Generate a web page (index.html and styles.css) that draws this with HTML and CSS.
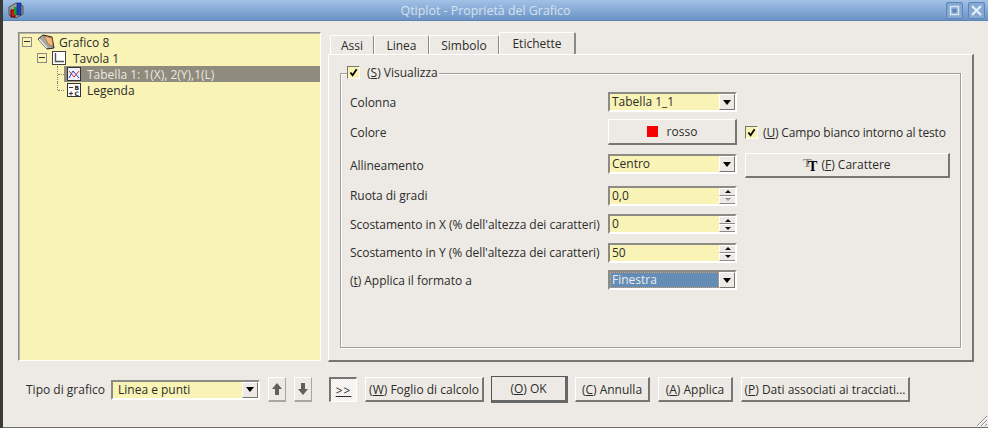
FILE: index.html
```html
<!DOCTYPE html>
<html lang="it">
<head>
    <meta charset="UTF-8">
    <title>Qtiplot - Proprietà del Grafico</title>
    <link rel="stylesheet" href="styles.css">
</head>
<body>
    <div class="window">
        <header class="titlebar">
            <svg class="app-icon" width="18" height="18" viewBox="0 0 18 18">
                <path d="M2 6 L9 2 L16 5 L16 13 L9 17 L2 14 Z" fill="#9a9a96" stroke="#55564f"/>
                <rect x="4" y="9" width="4" height="7" fill="#d01818" stroke="#600"/>
                <rect x="7" y="6" width="3" height="8" fill="#1a9a2a"/>
                <rect x="10" y="2" width="4" height="12" fill="#1b3fc0" stroke="#102070" stroke-width=".6"/>
            </svg>
            <div class="title">Qtiplot - Proprietà del Grafico</div>
            <div class="win-buttons">
                <span class="win-btn">
                    <svg width="15" height="15" viewBox="0 0 15 15"><rect x="3.5" y="3.5" width="8" height="8" fill="none" stroke="#dfe8f2" stroke-width="1.4"/><rect x="5.5" y="6" width="4" height="3.5" fill="#5f87b6"/></svg>
                </span>
                <span class="win-btn">
                    <svg width="15" height="15" viewBox="0 0 15 15"><path d="M3 3 L12 12 M12 3 L3 12" stroke="#e6edf5" stroke-width="2.2"/></svg>
                </span>
            </div>
        </header>

        <div class="content">
            <div class="top">
                <aside class="tree">
                    <div class="tree-row level-0">
                        <span class="expander"></span>
                        <svg class="tree-icon" width="18" height="16" viewBox="0 0 18 16">
                            <path d="M1 5 L6 1 L15 3 L17 14 L10 15 Z" fill="#a9a9a4" stroke="#222"/>
                            <path d="M7 2 L15 4 L16 13 L11 10 Z" fill="#f5b678" stroke="#8a5a2a" stroke-width=".6"/>
                            <path d="M2 5 L10 14" stroke="#e8e8e4" stroke-width="1.4"/>
                        </svg>
                        <span class="tree-label">Grafico 8</span>
                    </div>
                    <div class="tree-row level-1">
                        <span class="expander"></span>
                        <svg class="tree-icon" width="15" height="16" viewBox="0 0 15 16">
                            <rect x=".5" y="1.5" width="13" height="13" fill="#fff" stroke="#444"/>
                            <path d="M3.5 3 V11.5 H12" fill="none" stroke="#555" stroke-width="1.4"/>
                        </svg>
                        <span class="tree-label">Tavola 1</span>
                    </div>
                    <div class="tree-row level-2">
                        <span class="branch"></span>
                        <div class="tree-item selected">
                            <svg class="tree-icon" width="15" height="15" viewBox="0 0 15 15">
                                <rect x=".5" y=".5" width="13" height="13" fill="#eef0fa" stroke="#333"/>
                                <path d="M2 11 L6 4 L12 11" fill="none" stroke="#2a3fc8"/>
                                <path d="M2 4 L7 10 L12 4" fill="none" stroke="#d8343a"/>
                            </svg>
                            <span class="tree-label">Tabella 1: 1(X), 2(Y),1(L)</span>
                        </div>
                    </div>
                    <div class="tree-row level-2">
                        <span class="branch last"></span>
                        <div class="tree-item">
                            <svg class="tree-icon" width="15" height="15" viewBox="0 0 15 15">
                                <rect x=".5" y=".5" width="13" height="13" fill="#fff" stroke="#333"/>
                                <path d="M2 4.5 H6 M2 10.5 H6 M4 8.5 V12.5" stroke="#333"/>
                                <text class="legend-glyph" x="7.5" y="6.5">B</text>
                                <text class="legend-glyph" x="7.5" y="12.5">C</text>
                            </svg>
                            <span class="tree-label">Legenda</span>
                        </div>
                    </div>
                </aside>

                <section class="tabs">
                    <nav class="tab-bar">
                        <span class="tab tab-assi">Assi</span>
                        <span class="tab tab-linea">Linea</span>
                        <span class="tab tab-simbolo">Simbolo</span>
                        <span class="tab tab-etichette active">Etichette</span>
                    </nav>
                    <div class="panel">
                        <div class="group">
                            <div class="group-title">
                                <span class="check"><svg width="9" height="9" viewBox="0 0 10 10"><path d="M1.5 5 L4 8 L8.5 1.5" fill="none" stroke="#000" stroke-width="2"/></svg></span>
                                <span>(<u>S</u>) Visualizza</span>
                            </div>
                            <div class="form">
                                <label class="form-label">Colonna</label>
                                <div class="combo"><span class="combo-text">Tabella 1_1</span><span class="arrow-btn"><i></i></span></div>
                                <span></span>

                                <label class="form-label">Colore</label>
                                <button class="btn color-btn"><span class="swatch"></span>rosso</button>
                                <div class="white-box">
                                    <span class="check"><svg width="9" height="9" viewBox="0 0 10 10"><path d="M1.5 5 L4 8 L8.5 1.5" fill="none" stroke="#000" stroke-width="2"/></svg></span>
                                    <span>(<u>U</u>) Campo bianco intorno al testo</span>
                                </div>

                                <label class="form-label">Allineamento</label>
                                <div class="combo combo-high"><span class="combo-text">Centro</span><span class="arrow-btn"><i></i></span></div>
                                <button class="btn font-btn">
                                    <svg class="font-icon" width="15" height="16" viewBox="0 0 15 16">
                                        <text class="t-back" x="0" y="10">T</text>
                                        <text class="t-front" x="5" y="14">T</text>
                                    </svg>
                                    <span>(<u>F</u>) Carattere</span>
                                </button>

                                <label class="form-label">Ruota di gradi</label>
                                <div class="spin"><span class="combo-text">0,0</span><span class="spin-btns"><b class="up"></b><b class="down faded"></b></span></div>
                                <span></span>

                                <label class="form-label">Scostamento in X (% dell'altezza dei caratteri)</label>
                                <div class="spin"><span class="combo-text">0</span><span class="spin-btns"><b class="up"></b><b class="down"></b></span></div>
                                <span></span>

                                <label class="form-label">Scostamento in Y (% dell'altezza dei caratteri)</label>
                                <div class="spin"><span class="combo-text">50</span><span class="spin-btns"><b class="up"></b><b class="down"></b></span></div>
                                <span></span>

                                <label class="form-label">(<u>t</u>) Applica il formato a</label>
                                <div class="combo combo-focus"><span class="combo-text">Finestra</span><span class="arrow-btn"><i></i></span></div>
                                <span></span>
                            </div>
                        </div>
                    </div>
                </section>
            </div>

            <footer class="bottom">
                <label class="type-label">Tipo di grafico</label>
                <div class="combo type-combo"><span class="combo-text">Linea e punti</span><span class="arrow-btn"><i></i></span></div>
                <button class="btn arrow-tool">
                    <svg width="12" height="14" viewBox="0 0 12 14"><path d="M6 1 L11 7 H8 V13 H4 V7 H1 Z" fill="#5f5f5b"/></svg>
                </button>
                <button class="btn arrow-tool">
                    <svg width="12" height="14" viewBox="0 0 12 14"><path d="M6 13 L11 7 H8 V1 H4 V7 H1 Z" fill="#5f5f5b"/></svg>
                </button>
                <button class="btn more"><u>&gt;&gt;</u></button>
                <button class="btn foglio">(<u>W</u>) Foglio di calcolo</button>
                <button class="btn ok">(<u>O</u>) OK</button>
                <button class="btn annulla">(<u>C</u>) Annulla</button>
                <button class="btn applica">(<u>A</u>) Applica</button>
                <button class="btn dati">(<u>P</u>) Dati associati ai tracciati...</button>
            </footer>
        </div>

        <svg class="grip" width="13" height="13" viewBox="0 0 13 13">
            <path d="M12 2 L2 12 M12 6 L6 12 M12 10 L10 12" stroke="#8f8d88"/>
            <path d="M12 3 L3 12 M12 7 L7 12 M12 11 L11 12" stroke="#fff"/>
        </svg>
    </div>
</body>
</html>
```

FILE: styles.css
```css
html, body {
    margin: 0;
    padding: 0;
}

body {
    width: 988px;
    height: 428px;
    overflow: hidden;
    background: #3a3a38;
    font-family: "Open Sans", "DejaVu Sans", sans-serif;
    font-size: 12px;
    color: #2c2c2a;
}

.window {
    position: relative;
    box-sizing: border-box;
    width: 985px;
    height: 428px;
    margin-left: 3px;
    background: #edeae5;
    border-bottom: 1px solid #6f6e6a;
}

/* title bar */
.titlebar {
    display: flex;
    align-items: center;
    height: 21px;
    padding: 0 3px 0 4px;
    background: linear-gradient(#a2c1e6, #6b94c6);
    border-bottom: 1px solid #5d84b4;
    box-sizing: border-box;
}

.app-icon {
    flex: none;
}

.title {
    flex: 1;
    text-align: center;
    color: #d6e1ee;
    font-size: 12.4px;
}

.win-buttons {
    display: flex;
    gap: 5px;
}

.win-btn {
    display: flex;
    align-items: center;
    justify-content: center;
    width: 15px;
    height: 15px;
    border: 1px solid #5d84b4;
    border-radius: 2px;
    background: #86a9d4;
}

/* main area */
.content {
    padding: 11px 14px 0 15px;
}

.top {
    display: flex;
    gap: 7px;
    height: 329px;
}

.tree {
    box-sizing: border-box;
    width: 303px;
    padding-top: 1px;
    background: #f9f4b6;
    border: 1px solid #fff;
    border-top: 1px solid #8d8b85;
    border-left: 1px solid #8d8b85;
    box-shadow: inset 1px 1px 0 #b5b3ac;
}

.tree-row {
    display: flex;
    align-items: center;
    height: 16px;
}

.level-0 {
    padding-left: 3px;
}

.level-1 {
    padding-left: 18px;
}

.level-2 {
    padding-left: 38px;
}

.expander {
    flex: none;
    position: relative;
    box-sizing: border-box;
    width: 10px;
    height: 10px;
    margin-right: 5px;
    border: 1px solid #8d8b85;
}

.expander::after {
    content: "";
    position: absolute;
    left: 1px;
    top: 3px;
    width: 6px;
    height: 1px;
    background: #333;
}

.tree-icon {
    flex: none;
}

.level-0 .tree-label {
    margin-left: 4px;
}

.level-1 .tree-label {
    margin-left: 6px;
}

.tree-item {
    flex: 1;
    display: flex;
    align-items: center;
    align-self: stretch;
    padding-left: 3px;
}

.tree-item .tree-label {
    margin-left: 5px;
}

.selected {
    background: #8f8b7d;
    color: #ece9e2;
}

.branch {
    flex: none;
    position: relative;
    align-self: stretch;
    box-sizing: border-box;
    width: 7px;
    border-left: 1px dotted #85847c;
}

.branch::after {
    content: "";
    position: absolute;
    left: 0;
    top: 8px;
    width: 6px;
    border-top: 1px dotted #85847c;
}

.branch.last {
    align-self: flex-start;
    height: 8px;
}

.legend-glyph {
    font-family: "DejaVu Sans", sans-serif;
    font-size: 6px;
    font-weight: bold;
    fill: #222;
}

/* tabs */
.tabs {
    flex: 1;
    display: flex;
    flex-direction: column;
}

.tab-bar {
    display: flex;
    align-items: flex-end;
    height: 22px;
    padding-left: 2px;
}

.tab {
    box-sizing: border-box;
    height: 19px;
    padding-top: 1px;
    text-align: center;
    border-top: 1px solid #fff;
    border-left: 1px solid #fff;
    border-right: 1px solid #8a8985;
    border-top-left-radius: 2px;
    border-top-right-radius: 2px;
}

.tab-assi { width: 44px; }
.tab-linea { width: 55px; }
.tab-simbolo { width: 70px; }

.tab.active {
    width: 77px;
    height: 22px;
    padding-top: 2px;
    border-right-width: 2px;
}

.panel {
    flex: 1;
    box-sizing: border-box;
    padding: 18px 11px 12px 11px;
    border-top: 1px solid #fff;
    border-left: 1px solid #fff;
    border-right: 2px solid #777672;
    border-bottom: 2px solid #777672;
}

.group {
    box-sizing: border-box;
    height: 275px;
    border: 1px solid #a2a09b;
    box-shadow: 1px 1px 0 #fff, inset 1px 1px 0 #fff;
}

.group-title {
    display: flex;
    align-items: center;
    gap: 7px;
    width: fit-content;
    height: 14px;
    margin: -9px 0 0 6px;
    padding-right: 1px;
    background: #edeae5;
}

.check {
    flex: none;
    display: flex;
    align-items: center;
    justify-content: center;
    box-sizing: border-box;
    width: 13px;
    height: 13px;
    background: #f9f4b6;
    border: 1px solid #fff;
    border-top-color: #777672;
    border-left-color: #777672;
}

.form {
    display: grid;
    grid-template-columns: 250px 129px 205px;
    grid-template-rows: 20px 26px 26px 21px 22px 21px 20px;
    column-gap: 8px;
    row-gap: 7px;
    align-items: center;
    margin: 13px 0 0 9px;
}

.form-label {
    white-space: nowrap;
    letter-spacing: -0.04px;
}

/* combos and spin boxes */
.combo,
.spin {
    display: flex;
    box-sizing: border-box;
    height: 20px;
    background: #f9f4b6;
    border: 2px solid #8d8b85;
    border-right-color: #fff;
    border-bottom-color: #fff;
    outline: 1px solid #edeae5;
}

.combo-high {
    align-self: start;
    margin-top: 2px;
}

.combo-text {
    flex: 1;
    padding-left: 2px;
    line-height: 16px;
    white-space: nowrap;
}

.arrow-btn {
    flex: none;
    display: flex;
    align-items: center;
    justify-content: center;
    box-sizing: border-box;
    width: 16px;
    background: #edeae5;
    border-top: 1px solid #fff;
    border-left: 1px solid #fff;
    border-right: 1px solid #777672;
    border-bottom: 1px solid #777672;
}

.arrow-btn i {
    width: 0;
    height: 0;
    border-left: 4px solid transparent;
    border-right: 4px solid transparent;
    border-top: 5px solid #000;
}

.combo-focus .combo-text {
    background: #668db5;
    color: #e8edf2;
    padding-left: 1px;
    box-sizing: border-box;
    border: 1px dotted #d8a060;
    line-height: 14px;
}

.spin-btns {
    flex: none;
    display: flex;
    flex-direction: column;
    width: 16px;
}

.spin-btns b {
    flex: 1;
    display: flex;
    align-items: center;
    justify-content: center;
    background: #edeae5;
    border-top: 1px solid #fff;
    border-left: 1px solid #fff;
    border-bottom: 1px solid #8d8b85;
}

.spin-btns b::after {
    content: "";
    width: 0;
    height: 0;
    border-left: 3px solid transparent;
    border-right: 3px solid transparent;
}

.spin-btns .up::after {
    border-bottom: 3px solid #111;
}

.spin-btns .down::after {
    border-top: 3px solid #111;
}

.spin-btns .down.faded::after {
    border-top-color: #999;
}

/* buttons */
.btn {
    box-sizing: border-box;
    margin: 0;
    padding: 0;
    height: 25px;
    font: inherit;
    color: inherit;
    background: #edeae5;
    border: 1px solid #fff;
    border-right: 2px solid #777672;
    border-bottom: 2px solid #777672;
    white-space: nowrap;
}

.color-btn {
    display: flex;
    align-items: center;
    justify-content: center;
    gap: 9px;
    height: 26px;
}

.swatch {
    width: 11px;
    height: 11px;
    background: #f60000;
}

.white-box {
    display: flex;
    align-items: center;
    gap: 5px;
    white-space: nowrap;
    letter-spacing: -0.16px;
}

.font-btn {
    display: flex;
    align-items: center;
    justify-content: center;
    gap: 3px;
}

.font-icon {
    flex: none;
}

.t-back {
    font-family: "Liberation Serif", serif;
    font-size: 13px;
    font-weight: bold;
    fill: #8a8a86;
}

.t-front {
    font-family: "Liberation Serif", serif;
    font-size: 14px;
    font-weight: bold;
    fill: #000;
}

/* bottom row */
.bottom {
    display: flex;
    align-items: center;
    height: 27px;
    margin-top: 15px;
}

.type-label {
    margin-left: 8px;
    width: 85px;
    white-space: nowrap;
}

.type-combo {
    width: 149px;
}

.type-combo .combo-text {
    padding-left: 5px;
}

.arrow-tool {
    display: flex;
    align-items: center;
    justify-content: center;
    width: 18px;
    margin-left: 8px;
    border-right: 1px solid #a8a6a0;
    border-bottom: 2px solid #a8a6a0;
}

.more {
    width: 28px;
    margin-left: 17px;
    letter-spacing: 1px;
    border: 1px solid #fff;
    border-top: 2px solid #777672;
    border-left: 2px solid #777672;
    background: repeating-conic-gradient(#edeae5 0 25%, #fff 0 50%) 0 0 / 2px 2px;
}

.foglio {
    width: 119px;
    margin-left: 8px;
}

.ok {
    width: 77px;
    height: 27px;
    margin-left: 7px;
    border: 1px solid #555;
    border-right: 3px solid #666;
    border-bottom: 3px solid #666;
}

.annulla {
    width: 75px;
    margin-left: 7px;
}

.applica {
    width: 75px;
    margin-left: 8px;
}

.dati {
    width: 169px;
    margin-left: 8px;
}

.grip {
    position: absolute;
    right: 0;
    bottom: 0;
}
```
